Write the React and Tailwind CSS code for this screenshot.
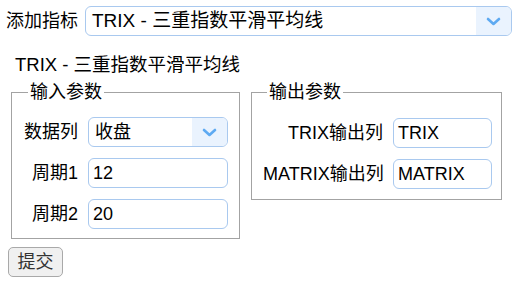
import React from "react";

function Chevron() {
  return (
    <svg width="15" height="9" viewBox="0 0 15 9" fill="none">
      <path d="M2 2 L7.5 7 L13 2" stroke="#5eaaf2" strokeWidth="2.6" strokeLinecap="round" strokeLinejoin="round" />
    </svg>
  );
}

function SelectBox({ value, className, textClass }) {
  return (
    <div className={`flex h-[30px] rounded-[6px] border border-[#a9c9ef] bg-white overflow-hidden ${className}`}>
      <div className={`flex-1 flex items-center pl-[6px] text-black whitespace-nowrap ${textClass}`}>{value}</div>
      <div className="w-[35px] bg-[#eaf3fe] flex items-center justify-center">
        <Chevron />
      </div>
    </div>
  );
}

function TextBox({ value, className }) {
  return (
    <div className={`flex items-center h-[30px] rounded-[6px] border border-[#a9c9ef] bg-white pl-[4px] text-black ${className}`}>
      {value}
    </div>
  );
}

export default function App() {
  return (
    <div
      className="w-[519px] h-[285px] bg-white text-black text-[18px] leading-[26px]"
      style={{ fontFamily: '"Liberation Sans", "Noto Sans CJK SC", sans-serif' }}
    >
      <div className="flex items-center pt-[6px] pl-[6px]">
        <span className="w-[79px]">添加指标</span>
        <SelectBox value="TRIX - 三重指数平滑平均线" className="w-[427px]" textClass="text-[19px]" />
      </div>
      <div className="pl-[15px] mt-[17px] text-[18.5px] leading-[24px]">TRIX - 三重指数平滑平均线</div>
      <div className="flex items-start pl-[11px] mt-[2px] gap-[11px]">
        <fieldset className="w-[229px] border border-[#a3a3a3] pl-[12px] pr-[10px] pb-[9px]">
          <legend className="ml-[4px] px-[2px]">输入参数</legend>
          <div className="grid grid-cols-[54px_140px] gap-x-[10px] gap-y-[11px] mt-[12px] items-center">
            <span className="text-right whitespace-nowrap">数据列</span>
            <SelectBox value="收盘" className="w-[140px]" textClass="" />
            <span className="text-right whitespace-nowrap">周期1</span>
            <TextBox value="12" className="w-[140px]" />
            <span className="text-right whitespace-nowrap">周期2</span>
            <TextBox value="20" className="w-[140px]" />
          </div>
        </fieldset>
        <fieldset className="w-[251px] border border-[#a3a3a3] pl-[11px] pr-[9px] pb-[10px]">
          <legend className="ml-[4px] px-[2px]">输出参数</legend>
          <div className="grid grid-cols-[120px_99px] gap-x-[10px] gap-y-[11px] mt-[13px] items-center">
            <span className="text-right whitespace-nowrap">TRIX输出列</span>
            <TextBox value="TRIX" className="w-[99px]" />
            <span className="text-right whitespace-nowrap">MATRIX输出列</span>
            <TextBox value="MATRIX" className="w-[99px]" />
          </div>
        </fieldset>
      </div>
      <div className="pl-[8px] mt-[8px]">
        <button className="w-[55px] h-[30px] rounded-[5px] border border-[#a9a9a9] bg-[#f0f0f0] text-[18px] text-[#333] flex items-center justify-center">
          提交
        </button>
      </div>
    </div>
  );
}
